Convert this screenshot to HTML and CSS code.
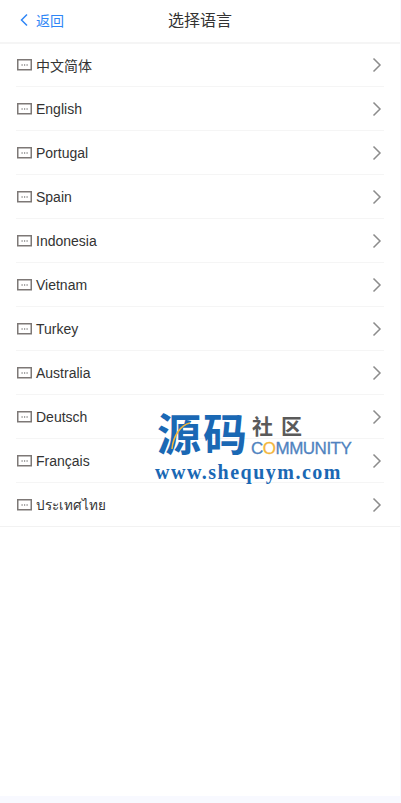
FILE: index.html
```html
<!DOCTYPE html>
<html lang="zh-CN">
<head>
    <meta charset="UTF-8">
    <title>选择语言</title>
    <link rel="stylesheet" href="styles.css">
</head>
<body>
    <svg class="sprites" width="0" height="0">
        <symbol id="flag" viewBox="0 0 15 12">
            <rect x=".75" y=".75" width="13.500" height="10" fill="#fff" stroke="#7d7876" stroke-width="1.500"/>
            <path d="M4.500 6h1.200M7 6h1.200M9.500 6h1.200" stroke="#888" stroke-width="1.300"/>
        </symbol>
        <symbol id="arrow" viewBox="0 0 10 16">
            <path d="M1.500 1.500 8 8l-6.500 6.500" fill="none" stroke="#8c8c8c" stroke-width="1.500"/>
        </symbol>
    </svg>

    <div class="page">
        <header class="navbar">
            <a class="back" href="#">
                <svg class="back-icon" width="10" height="14" viewBox="0 0 10 14"><path d="M8 1.500 2.500 7 8 12.500" fill="none" stroke="#2f86f6" stroke-width="1.500"/></svg>
                <span>返回</span>
            </a>
            <h1 class="title">选择语言</h1>
        </header>

        <ul class="lang-list">
            <li class="lang-item"><svg class="flag"><use href="#flag"/></svg><span class="lang-name">中文简体</span><svg class="arrow"><use href="#arrow"/></svg></li>
            <li class="lang-item"><svg class="flag"><use href="#flag"/></svg><span class="lang-name">English</span><svg class="arrow"><use href="#arrow"/></svg></li>
            <li class="lang-item"><svg class="flag"><use href="#flag"/></svg><span class="lang-name">Portugal</span><svg class="arrow"><use href="#arrow"/></svg></li>
            <li class="lang-item"><svg class="flag"><use href="#flag"/></svg><span class="lang-name">Spain</span><svg class="arrow"><use href="#arrow"/></svg></li>
            <li class="lang-item"><svg class="flag"><use href="#flag"/></svg><span class="lang-name">Indonesia</span><svg class="arrow"><use href="#arrow"/></svg></li>
            <li class="lang-item"><svg class="flag"><use href="#flag"/></svg><span class="lang-name">Vietnam</span><svg class="arrow"><use href="#arrow"/></svg></li>
            <li class="lang-item"><svg class="flag"><use href="#flag"/></svg><span class="lang-name">Turkey</span><svg class="arrow"><use href="#arrow"/></svg></li>
            <li class="lang-item"><svg class="flag"><use href="#flag"/></svg><span class="lang-name">Australia</span><svg class="arrow"><use href="#arrow"/></svg></li>
            <li class="lang-item"><svg class="flag"><use href="#flag"/></svg><span class="lang-name">Deutsch</span><svg class="arrow"><use href="#arrow"/></svg></li>
            <li class="lang-item"><svg class="flag"><use href="#flag"/></svg><span class="lang-name">Français</span><svg class="arrow"><use href="#arrow"/></svg></li>
            <li class="lang-item"><svg class="flag"><use href="#flag"/></svg><span class="lang-name lang-thai">ประเทศไทย</span><svg class="arrow"><use href="#arrow"/></svg></li>
        </ul>

        <!-- watermark sits over the list -->
        <div class="watermark">
            <div class="wm-top">
                <span class="wm-big">源码</span>
                <svg class="wm-swoosh" width="22" height="30" viewBox="0 0 22 30"><path d="M2 28C3 16 10 4 20 2" fill="none" stroke="#f3b63c" stroke-width="1.500"/></svg>
                <div class="wm-side">
                    <span class="wm-cn">社区</span>
                    <span class="wm-en">C<b>O</b>MMUNITY</span>
                </div>
            </div>
            <div class="wm-url">www.shequym.com</div>
        </div>
    </div>
</body>
</html>
```

FILE: styles.css
```css
html, body {
    margin: 0;
    padding: 0;
    height: 100%;
    background-color: #f8f9ff;
}

body {
    font-family: 'Liberation Sans', Arial, 'Noto Sans CJK SC', sans-serif;
    color: #333;
    overflow: hidden;
}

.sprites {
    display: block;
    height: 0;
}

.page {
    position: relative;
    width: 400px;
    height: 796px;
    background-color: #fff;
}

.navbar {
    position: relative;
    display: flex;
    align-items: center;
    justify-content: center;
    height: 42px;
    border-bottom: 2px solid #f5f5f5;
}

.back {
    position: absolute;
    left: 19px;
    top: 0;
    height: 39px;
    display: flex;
    align-items: center;
    gap: 7px;
    color: #2f86f6;
    font-size: 14px;
    text-decoration: none;
}

.title {
    margin: 0 0 4px;
    font-size: 16px;
    font-weight: 400;
    color: #333;
}

.lang-list {
    list-style: none;
    margin: 0;
    padding: 0;
    border-bottom: 1px solid #f2f2f2;
}

.lang-item {
    display: flex;
    align-items: center;
    height: 43px;
    margin: 0 16px;
    border-bottom: 1px solid #f5f5f5;
    font-size: 14px;
}

.lang-item:first-child {
    height: 42px;
}

.lang-item:last-child {
    border-bottom: none;
}

.flag {
    flex-shrink: 0;
    width: 15px;
    height: 12px;
    margin: 0 4px 0 1px;
}

.lang-name {
    flex: 1;
}

.lang-thai {
    font-size: 13.5px;
}

.arrow {
    width: 10px;
    height: 16px;
    margin-right: 2px;
}

.watermark {
    position: absolute;
    left: 155px;
    top: 411px;
    width: 200px;
}

.wm-top {
    position: relative;
    display: flex;
    align-items: flex-start;
}

.wm-big {
    font-size: 44px;
    line-height: 50px;
    font-weight: 700;
    color: #1a68b4;
    letter-spacing: 2px;
    margin-left: 2px;
    white-space: nowrap;
}

.wm-swoosh {
    position: absolute;
    left: 15px;
    top: 10px;
}

.wm-side {
    display: flex;
    flex-direction: column;
    margin-left: 2px;
    padding-top: 4px;
}

.wm-cn {
    font-size: 21px;
    line-height: 24px;
    font-weight: 700;
    color: #5a5a5a;
    letter-spacing: 8px;
    margin-left: 1px;
}

.wm-en {
    font-size: 17px;
    line-height: 20px;
    color: #4f83c0;
    letter-spacing: -0.5px;
    -webkit-text-stroke: 0.3px #4f83c0;
}

.wm-en b {
    font-weight: 400;
    color: #f3b63c;
    -webkit-text-stroke: 0.3px #f3b63c;
}

.wm-url {
    font-family: 'Liberation Serif', 'Times New Roman', serif;
    font-size: 20px;
    line-height: 20px;
    font-weight: 700;
    color: #1a68b4;
    letter-spacing: 1.5px;
    white-space: nowrap;
    margin-top: 1px;
}
```
